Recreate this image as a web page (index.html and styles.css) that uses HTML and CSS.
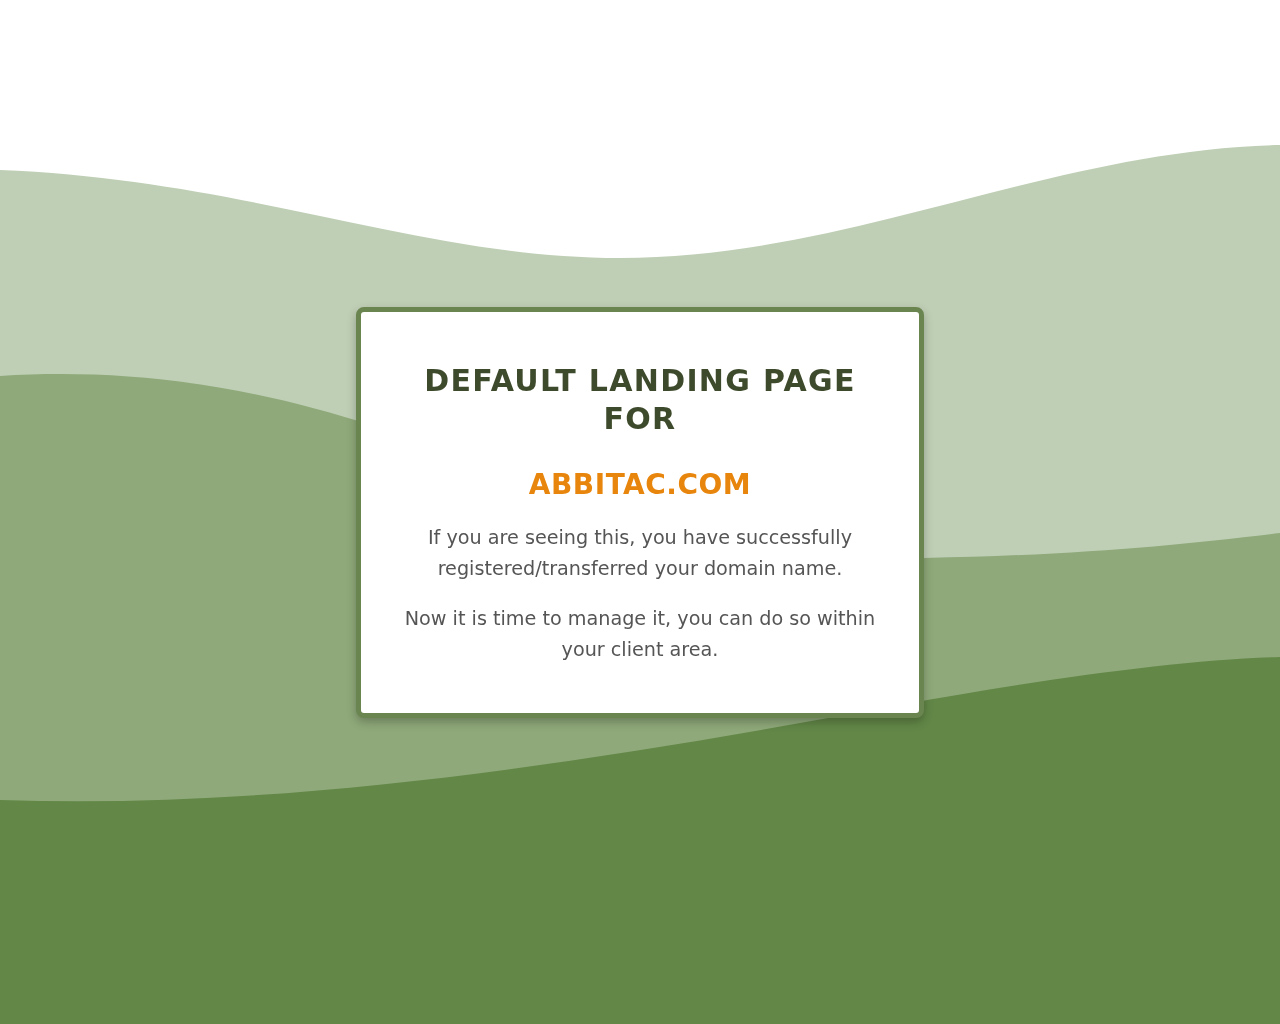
FILE: index.html
```html
<!DOCTYPE html>
<html lang="en">
<head>
<meta charset="utf-8">
<title>Default Landing Page</title>
<link rel="stylesheet" href="styles.css">
</head>
<body>
<svg class="waves" viewBox="0 0 1280 1024" preserveAspectRatio="none" aria-hidden="true">
  <path class="w1" d="M0,170 C250,180 420,258 620,258 C850,258 1050,150 1280,145 L1280,1024 L0,1024 Z"/>
  <path class="w2" d="M0,376 C160,366 320,395 500,475 C650,540 800,560 924,558 C1080,555 1180,545 1280,533 L1280,1024 L0,1024 Z"/>
  <path class="w3" d="M0,800 C300,810 600,760 900,705 C1050,678 1180,660 1280,657 L1280,1024 L0,1024 Z"/>
</svg>
<main class="page">
  <section class="card">
    <h1 class="title">DEFAULT LANDING PAGE FOR</h1>
    <h2 class="domain">ABBITAC.COM</h2>
    <p class="text">If you are seeing this, you have successfully registered/transferred your domain name.</p>
    <p class="text">Now it is time to manage it, you can do so within your client area.</p>
  </section>
</main>
</body>
</html>
```
FILE: styles.css
```css
html, body {
  margin: 0;
  padding: 0;
  height: 100%;
  background: #ffffff;
  font-family: "DejaVu Sans", Verdana, sans-serif;
}
.waves {
  position: fixed;
  left: 0;
  top: 0;
  width: 100%;
  height: 100%;
  z-index: 0;
}
.w1 { fill: #bfcfb5; }
.w2 { fill: #8fa97a; }
.w3 { fill: #628747; }
.page {
  position: relative;
  z-index: 1;
  height: 100vh;
  display: flex;
  align-items: center;
  justify-content: center;
}
.card {
  width: 478px;
  background: #ffffff;
  border: 5px solid #6b8550;
  border-radius: 8px;
  padding: 50px 40px 48px;
  box-shadow: 0 4px 10px rgba(0, 0, 0, 0.25);
  text-align: center;
}
.title {
  margin: 0;
  font-size: 30px;
  line-height: 38px;
  font-weight: bold;
  color: #3d4a2b;
  letter-spacing: 1.3px;
}
.domain {
  margin: 28px 0 18px;
  font-size: 28px;
  line-height: 38px;
  font-weight: bold;
  color: #e8850c;
  letter-spacing: 0.5px;
}
.text {
  margin: 0;
  font-size: 19.2px;
  line-height: 31px;
  color: #555555;
}
.text + .text {
  margin-top: 19px;
}
```
